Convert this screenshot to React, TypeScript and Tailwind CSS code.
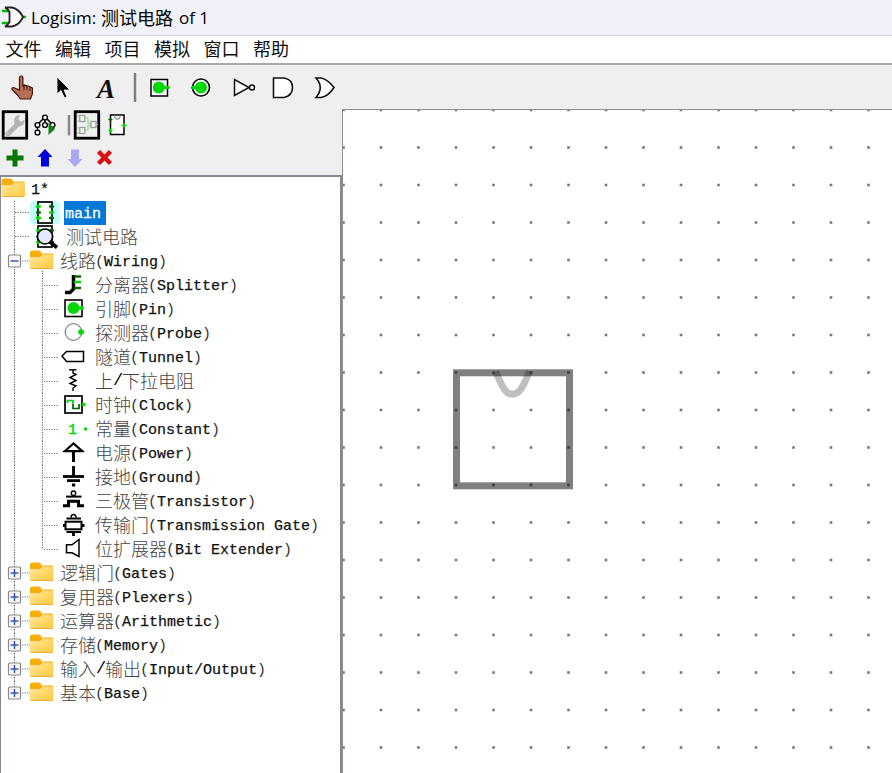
import React from "react";

type IconProps = { w: number; h: number; vb?: string; children: React.ReactNode };

function Glyph({ w, h, vb, children }: IconProps) {
  return (
    <svg width={w} height={h} viewBox={vb ?? `0 0 ${w} ${h}`} fill="none" className="block shrink-0">
      {children}
    </svg>
  );
}

const GREEN = "#00d800";
const DARK = "#006400";

/* ---------- tree ---------- */

function Folder() {
  return (
    <g>
      <path d="M0.5 3 q0 -2 2 -2 h7 q1.500 0 2 1.500 l1 1.500 h11 v6 h-23z" fill="#f5ae0c" />
      <path d="M0.5 7.500 h10 l2.500 -2.500 h9.500 q1.500 0 1.500 1.500 v11.500 q0 1.500 -1.500 1.500 h-20.500 q-1.500 0 -1.500 -1.500z" fill="url(#folderFill)" />
      <path d="M1 19 h22" stroke="#e9ad35" strokeWidth="1" />
    </g>
  );
}

const dots = { stroke: "#707070", strokeWidth: 1.2, strokeDasharray: "1.2 1.3" };

function Trunk({ end = false }: { end?: boolean }) {
  return <path d={end ? "M14.500 0V12" : "M14.500 0V24"} {...dots} />;
}

function Expander({ open }: { open: boolean }) {
  return (
    <g>
      <rect x="8.500" y="6" width="12" height="12" rx="1" fill="#f7f7f7" stroke="#8b8b8b" strokeWidth="1.200" />
      <path d="M10.500 12h8" stroke="#2f4fa5" strokeWidth="1.400" />
      {!open && <path d="M14.500 8v8" stroke="#2f4fa5" strokeWidth="1.400" />}
    </g>
  );
}

function Latin({ text, selected }: { text: string; selected?: boolean }) {
  const tone = selected
    ? "text-white [-webkit-text-stroke:0.3px_#fff]"
    : "text-[#111] [-webkit-text-stroke:0.25px_#111]";
  return (
    <span className={"pt-[3px] font-['Liberation_Mono',monospace] text-[15px] leading-[21px] " + tone}>
      {text.split(/([()])/).map((part, i) =>
        part === "(" || part === ")" ? (
          <span key={i} className="text-[#333] [-webkit-text-stroke:0]">{part}</span>
        ) : (
          part
        ),
      )}
    </span>
  );
}

function Label({ zh, en, selected }: { zh?: string; en?: string; selected?: boolean }) {
  return (
    <span className={"flex h-6 items-center whitespace-pre " + (selected ? "bg-[#0078d7] pl-px pr-[5px]" : "")}>
      {zh &&
        zh.split(/(\/)/).map((part, i) =>
          part === "/" ? (
            <span key={i} className="w-[9px] text-center font-['Liberation_Mono',monospace] text-[17px] leading-6 text-black">/</span>
          ) : (
            <span key={i} className="pb-0.5 font-['Noto_Sans_CJK_SC',sans-serif] text-[18px] font-light leading-[22px] text-[#444]">{part}</span>
          ),
        )}
      {en && (
        <span className={zh ? "-ml-px flex" : "flex"}>
          <Latin text={en} selected={selected} />
        </span>
      )}
    </span>
  );
}

function Ports() {
  return (
    <g>
      <rect x="8" y="1" width="14" height="21" fill="#fff" stroke="#000" strokeWidth="1.700" />
      <path d="M6 5.500h5M6 17h5M19 11.500h5" stroke={GREEN} strokeWidth="2" />
      <path d="M6 11.500h5M19 5.500h5M19 17h5" stroke={DARK} strokeWidth="2" />
      <path d="M8.500 3.500v4M8.500 15v4M21.500 9.500v4" stroke={GREEN} strokeWidth="2" />
      <path d="M8.500 9.500v4M21.500 3.500v4M21.500 15v4" stroke={DARK} strokeWidth="2" />
    </g>
  );
}

const wiring: { zh: string; en?: string; icon: React.ReactNode }[] = [
  {
    zh: "分离器", en: "(Splitter)",
    icon: (
      <g>
        <path d="M5 19.500h5l3.500 -3.500V2" stroke="#000" strokeWidth="3.500" />
        <path d="M14 3.500h7" stroke={DARK} strokeWidth="2.400" />
        <path d="M14 9h7" stroke={GREEN} strokeWidth="2.400" />
        <path d="M14 15h7" stroke={DARK} strokeWidth="2.400" />
      </g>
    ),
  },
  {
    zh: "引脚", en: "(Pin)",
    icon: (
      <g>
        <rect x="5" y="3" width="17" height="16.500" stroke="#000" strokeWidth="1.600" />
        <circle cx="13.500" cy="11" r="6" fill={GREEN} />
        <circle cx="22" cy="11" r="2" fill={GREEN} />
        <path d="M17 11h5" stroke={GREEN} strokeWidth="3" />
      </g>
    ),
  },
  {
    zh: "探测器", en: "(Probe)",
    icon: (
      <g>
        <circle cx="13.500" cy="11" r="8.300" stroke="#888" strokeWidth="1.300" />
        <circle cx="21" cy="11" r="2.800" fill={GREEN} />
        <path d="M19 11h5" stroke={GREEN} strokeWidth="2" />
      </g>
    ),
  },
  {
    zh: "隧道", en: "(Tunnel)",
    icon: <path d="M2 11L6.500 6.500H23.500V16.500H6.500Z" stroke="#000" strokeWidth="1.500" />,
  },
  {
    zh: "上/下拉电阻",
    icon: (
      <g stroke="#000" strokeWidth="1.400">
        <path d="M9 .8h7.500" />
        <path d="M13 1v3l3 1.500l-6 3l6 3l-6 3l6 2.500l-3 2v3" />
      </g>
    ),
  },
  {
    zh: "时钟", en: "(Clock)",
    icon: (
      <g>
        <rect x="5" y="3" width="17" height="17" stroke="#000" strokeWidth="1.700" />
        <path d="M7.500 10V7.500H13V11.500" stroke={GREEN} strokeWidth="1.700" />
        <path d="M13 11v4.500h6V11" stroke={DARK} strokeWidth="1.700" />
        <path d="M22 11.500h3.500" stroke={GREEN} strokeWidth="3" />
      </g>
    ),
  },
  {
    zh: "常量", en: "(Constant)",
    icon: (
      <g>
        <text x="8" y="17" fill={GREEN} stroke={GREEN} strokeWidth=".4" fontSize="15" fontFamily="Liberation Mono, monospace">1</text>
        <circle cx="25.500" cy="12" r="1.700" fill={GREEN} />
      </g>
    ),
  },
  {
    zh: "电源", en: "(Power)",
    icon: (
      <g stroke="#000">
        <path d="M5 10L13.500 2.500L22 10Z" strokeWidth="2.200" />
        <path d="M3 10.500h21" strokeWidth="1.500" />
        <path d="M13.500 10v11" strokeWidth="3" />
      </g>
    ),
  },
  {
    zh: "接地", en: "(Ground)",
    icon: (
      <g stroke="#000">
        <path d="M13.500 1v10" strokeWidth="2.800" />
        <path d="M3 11.500h21" strokeWidth="2.800" />
        <path d="M7 15.700h13M12 20h3.200" strokeWidth="2.800" />
      </g>
    ),
  },
  {
    zh: "三极管", en: "(Transistor)",
    icon: (
      <g stroke="#000">
        <circle cx="13.500" cy="4.200" r="2.200" strokeWidth="1.400" />
        <path d="M6 7.600h15.500" strokeWidth="2" />
        <path d="M3 16.800H8.500V12.200H18.500V16.800H24" strokeWidth="3" />
      </g>
    ),
  },
  {
    zh: "传输门", en: "(Transmission Gate)",
    icon: (
      <g stroke="#000">
        <path d="M11 4.500q0 -3 2.500 -3t2.500 3" strokeWidth="1.500" />
        <path d="M6.500 5.500h14.500M6.500 19h14.500" strokeWidth="1.800" />
        <rect x="5.500" y="8.700" width="16" height="7.600" strokeWidth="2" />
        <path d="M3 12.500h3M22 12.500h2.500M13.500 19.500v3.500" strokeWidth="2.800" />
      </g>
    ),
  },
  {
    zh: "位扩展器", en: "(Bit Extender)",
    icon: <path d="M6.500 7.800H12L19 2.500V19.500L12 15.800H6.500Z" stroke="#000" strokeWidth="1.500" />,
  },
];

const libraries = [
  ["逻辑门", "(Gates)"],
  ["复用器", "(Plexers)"],
  ["运算器", "(Arithmetic)"],
  ["存储", "(Memory)"],
  ["输入/输出", "(Input/Output)"],
  ["基本", "(Base)"],
];

function LibraryRow({ zh, en, open = false, last = false }: { zh: string; en: string; open?: boolean; last?: boolean }) {
  return (
    <div className="flex h-6">
      <Glyph w={60} h={24}>
        <Trunk end={last} />
        <path d="M22 12H30" {...dots} />
        {open && <path d="M42.500 22V24" {...dots} />}
        <Expander open={open} />
        <g transform="translate(29.500 0.500)"><Folder /></g>
      </Glyph>
      <Label zh={zh} en={en} />
    </div>
  );
}

function Explorer() {
  return (
    <div className="flex min-h-0 flex-1 flex-col overflow-hidden border-l-[1.500px] border-r-2 border-t-2 border-[#858994] bg-white">
      <div className="-ml-px">
        <div className="flex h-6">
          <Glyph w={31} h={24}>
            <g transform="translate(1 0.500)"><Folder /></g>
          </Glyph>
          <Label en="1*" />
        </div>
        <div className="flex h-6">
          <Glyph w={64} h={24}>
            <Trunk />
            <path d="M15 11.500H30" {...dots} />
            <rect x="30" y="0" width="30" height="23" rx="4" fill="#c0ffff" />
            <g transform="translate(30 0)"><Ports /></g>
          </Glyph>
          <Label en="main" selected />
        </div>
        <div className="flex h-6">
          <Glyph w={66} h={24}>
            <Trunk />
            <path d="M15 11.500H30" {...dots} />
            <g transform="translate(30 0)">
              <Ports />
              <circle cx="15" cy="11.500" r="7.500" fill="#e4e8ff" stroke="#000" strokeWidth="1.500" />
              <path d="M20 17L27 22.500" stroke="#000" strokeWidth="3.500" />
            </g>
          </Glyph>
          <Label zh="测试电路" />
        </div>
        <LibraryRow zh="线路" en="(Wiring)" open />
        {wiring.map((item, i) => (
          <div key={item.zh} className="flex h-6">
            <Glyph w={95} h={24}>
              <Trunk />
              <path d={i === wiring.length - 1 ? "M42.500 0V12" : "M42.500 0V24"} {...dots} />
              <path d="M44 12.500H58" {...dots} />
              <g transform="translate(60 0)">{item.icon}</g>
            </Glyph>
            <Label zh={item.zh} en={item.en} />
          </div>
        ))}
        {libraries.map(([zh, en], i) => (
          <LibraryRow key={en} zh={zh} en={en} last={i === libraries.length - 1} />
        ))}
      </div>
    </div>
  );
}

/* ---------- toolbars ---------- */

function MainToolbar() {
  return (
    <div className="flex h-11 shrink-0 items-start">
      <Glyph w={343} h={44} vb="0 65 343 44">
        <path d="M19.500 90V78q0 -2 1.700 -2t1.700 2v8l1.500 -1l2.500 .8l1.500 .2l2 1l2 1v6l-2 5H20.500l-4 -5l-4.500 -4.500q-.5 -2 1.500 -2z" fill="#b96f55" stroke="#3a1710" strokeWidth="1.200" />
        <path d="M24 85v5M27 86v4M30 87v4" stroke="#3a1710" />
        <path d="M57 77V94L61 90.500L64.500 98L67 97L64 90H70Z" fill="#000" stroke="#fff" strokeWidth=".8" />
        <text x="97" y="98" fontFamily="Liberation Serif, serif" fontSize="27" fontWeight="700" fontStyle="italic" fill="#111">A</text>
        <path d="M135 73V102" stroke="#808080" strokeWidth="2.500" />
        <rect x="151" y="79.500" width="16.500" height="16.500" fill="#fff" stroke="#000" strokeWidth="1.500" />
        <circle cx="158.800" cy="87.500" r="6" fill={GREEN} />
        <path d="M162 87.500h6.500" stroke={GREEN} strokeWidth="3" strokeLinecap="round" />
        <circle cx="201" cy="87.500" r="8.500" fill="#fff" stroke="#000" strokeWidth="1.600" />
        <circle cx="201" cy="87.500" r="6" fill={GREEN} />
        <path d="M192.500 87.500h4" stroke={GREEN} strokeWidth="3.500" strokeLinecap="round" />
        <path d="M234.500 79.500V95.500L249 87.500Z" fill="#fff" stroke="#111" strokeWidth="1.500" />
        <circle cx="252" cy="87.500" r="2.500" fill="#fff" stroke="#111" strokeWidth="1.500" />
        <path d="M273.500 78H284Q292.500 79.500 292.500 87.500T284 97.500H273.500Z" fill="#fff" stroke="#111" strokeWidth="1.600" />
        <path d="M316 78H321Q328 79.500 334 87.500Q328 96.500 321 97.500H316Q324.500 87.500 316 78Z" fill="#fff" stroke="#111" strokeWidth="1.600" />
      </Glyph>
    </div>
  );
}

function SideToolbars() {
  return (
    <div className="h-[66px] shrink-0">
      <Glyph w={341} h={66} vb="0 109 341 66">
        <rect x="3.200" y="111.700" width="23.500" height="26.500" stroke="#000" strokeWidth="2.800" />
        <path d="M8 134L16.500 125.500" stroke="#b4b4b4" strokeWidth="5" strokeLinecap="round" />
        <path d="M24.500 119.500l-3.500 2.500l-2.500 -2.500l1.500 -4.500q-6 0 -6 6q0 5.500 6 5.500q5 -1.500 4.500 -7z" fill="#b4b4b4" />
        <circle cx="7.800" cy="133.500" r=".8" fill="#efefef" />
        <path d="M37.500 126V131M39 123L44 118L46 118L51 123M45 118V123" stroke="#000" strokeWidth="1.500" />
        <g fill="#fff" stroke="#000" strokeWidth="1.400">
          <circle cx="45" cy="117.500" r="2.400" />
          <circle cx="37.500" cy="125" r="2.400" />
          <circle cx="45" cy="125" r="2.400" />
          <circle cx="52.500" cy="125" r="2.400" />
          <circle cx="37.500" cy="132.500" r="2.400" />
        </g>
        <path d="M48.500 122.500V135L55 129Z" fill="#118011" />
        <path d="M69 115V135.500" stroke="#888" strokeWidth="2.500" />
        <rect x="75.200" y="111.700" width="23.500" height="26.500" stroke="#000" strokeWidth="2.800" />
        <path d="M77 116h3M77 121h3M77 128h3M77 133h3M85 118h3v5.500h3M85 130h3v-4.500h3M96 124.500h2" stroke="#8bdc8b" strokeWidth="1.200" />
        <g fill="#f7f7f7" stroke="#9c9c9c" strokeWidth="1.300">
          <rect x="79.800" y="115.500" width="5" height="6" />
          <rect x="79.800" y="127.500" width="5" height="6" />
          <rect x="91" y="121.500" width="5" height="6" />
        </g>
        <rect x="110.500" y="115" width="13.500" height="19.500" fill="#fff" stroke="#000" strokeWidth="1.500" />
        <path d="M114.500 115.500q0 3.500 2.800 3.500t2.800 -3.500" stroke="#999" strokeWidth="1.400" />
        <path d="M108.500 119.500h4M110.500 118v3" stroke={DARK} strokeWidth="1.600" />
        <path d="M108.500 130.500h4M110.500 128.500v4M121.500 125.500h5M124 123.500v4" stroke={GREEN} strokeWidth="1.700" />
        <path d="M6.500 158H23.500M15 149.500V166.500" stroke="#047804" strokeWidth="5" />
        <path d="M45 149L52.500 157H49V166.500H41V157H37.500Z" fill="#0000dc" />
        <path d="M75 167L82.500 159H79V149.500H71V159H67.500Z" fill="#a9a9ef" />
        <path d="M98.500 151.500L110.500 163.500M110.500 151.500L98.500 163.500" stroke="#dc1010" strokeWidth="4.500" />
      </Glyph>
    </div>
  );
}

/* ---------- circuit canvas ---------- */

const columns = Array.from({ length: 15 }, (_, i) => 0.5 + i * 37.5);
const rows = Array.from({ length: 18 }, (_, i) => i * 37.5);

function Canvas() {
  return (
    <div className="min-w-0 flex-1 overflow-hidden border-l-[1.500px] border-t border-[#8b8f97] bg-white">
      <svg width="549" height="663" className="block">
        <rect x="113.500" y="262.800" width="113" height="113" fill="none" stroke="#808080" strokeWidth="7" />
        <path d="M152.500 261.500C158 273 161.500 284.300 169.500 284.300S181.500 273 186.500 261.500" fill="none" stroke="#000" strokeOpacity=".25" strokeWidth="7" />
        {rows.map((y) =>
          columns.map((x) => <rect key={`${x}-${y}`} x={x - 1.3} y={y - 1.3} width="2.600" height="2.600" fill="#000" fillOpacity=".53" />),
        )}
      </svg>
    </div>
  );
}

export default function App() {
  return (
    <div className="flex h-[773px] w-[892px] flex-col overflow-hidden bg-[#efefef]">
      <header className="flex h-9 shrink-0 items-center border-b border-[#d4d5da] bg-[#f1f2f9] text-black">
        <Glyph w={31} h={35}>
          <path d="M2 11h8M2 23h8M22 17h4" stroke="#00b800" strokeWidth="2.500" />
          <path d="M5 7.500H12Q19 9 23 17Q19 25.500 12 26.500H5Q8 25 9.500 22V12Q8 9 5 7.500Z" fill="#fff" stroke="#222" strokeWidth="1.800" />
          <defs>
            <linearGradient id="folderFill" x1="0" y1="0" x2="1" y2="1">
              <stop offset="0" stopColor="#ffe69a" />
              <stop offset="1" stopColor="#ffcb40" />
            </linearGradient>
          </defs>
        </Glyph>
        <span className="w-[70px] whitespace-pre font-['Open_Sans',sans-serif] text-[17px] leading-6">Logisim:</span>
        <span className="w-[78px] pb-0.5 font-['Noto_Sans_CJK_SC',sans-serif] text-[18px] leading-[22px]">测试电路</span>
        <span className="whitespace-pre font-['Open_Sans',sans-serif] text-[17px] leading-6">of 1</span>
      </header>
      <nav className="flex h-[29px] shrink-0 items-center gap-[13.500px] border-b-2 border-[#aaa] bg-white pb-[3px] pl-[5.500px] font-['Noto_Sans_CJK_SC',sans-serif] text-[18px] leading-6 text-[#111]">
        {["文件", "编辑", "项目", "模拟", "窗口", "帮助"].map((m) => (
          <span key={m}>{m}</span>
        ))}
      </nav>
      <MainToolbar />
      <div className="flex min-h-0 flex-1">
        <aside className="flex w-[342px] shrink-0 flex-col">
          <SideToolbars />
          <Explorer />
        </aside>
        <Canvas />
      </div>
    </div>
  );
}
